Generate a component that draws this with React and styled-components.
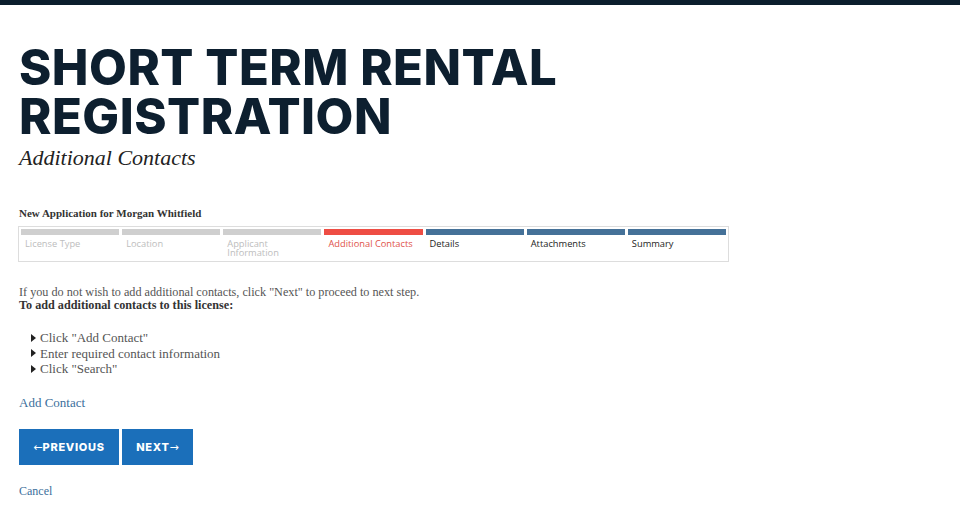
import React from "react";
import styled, { createGlobalStyle } from "styled-components";

const GlobalStyle = createGlobalStyle`
  html, body {
    margin: 0;
    padding: 0;
    background: #fff;
  }
  body {
    font-family: "Liberation Serif", "DejaVu Serif", serif;
    color: #444;
  }
`;

const TopBar = styled.div`
  height: 5px;
  background: #0b1e2d;
`;

const Page = styled.main`
  padding: 38px 19px 0 19px;
`;

const Title = styled.h1`
  margin: 0;
  font-family: Inter, "Noto Sans", sans-serif;
  font-weight: 800;
  font-size: 49px;
  line-height: 49px;
  letter-spacing: 0.5px;
  color: #0d1f2f;
  width: 570px;
`;

const Subtitle = styled.h2`
  margin: 5px 0 0 0;
  font-style: italic;
  font-weight: 400;
  font-size: 22px;
  line-height: 24px;
  color: #222;
`;

const AppLabel = styled.div`
  margin-top: 37px;
  font-size: 11px;
  font-weight: 700;
  color: #333;
`;

const Steps = styled.ol`
  list-style: none;
  margin: 7px 0 0 -1px;
  padding: 2px 2px 0 2px;
  width: 705px;
  height: 32px;
  border: 1px solid #ddd;
  display: grid;
  grid-template-columns: repeat(7, 1fr);
  column-gap: 3px;
`;

const stepColors = {
  done: { bar: "#cfcfcf", text: "#bdbdbd" },
  current: { bar: "#ee4d44", text: "#e0524a" },
  todo: { bar: "#457198", text: "#222" },
};

const Step = styled.li`
  border-top: 6px solid ${(p) => stepColors[p.$state].bar};
  padding: 4px 0 0 4px;
  font-family: "Open Sans", "Noto Sans", sans-serif;
  font-size: 9.3px;
  line-height: 9px;
  color: ${(p) => stepColors[p.$state].text};
`;

const Intro = styled.p`
  margin: 24px 0 0 0;
  font-size: 12.2px;
  line-height: 13px;
  color: #555;
`;

const Strong = styled.strong`
  display: block;
  color: #333;
`;

const Bullets = styled.ul`
  list-style: none;
  margin: 18px 0 0 0;
  padding: 0 0 0 12px;
  font-size: 13px;
  line-height: 15.5px;
  color: #555;
`;

const Bullet = styled.li`
  display: flex;
  align-items: center;
  gap: 4px;

  &::before {
    content: "";
    width: 0;
    height: 0;
    border-top: 4px solid transparent;
    border-bottom: 4px solid transparent;
    border-left: 5px solid #222;
  }
`;

const TextLink = styled.a`
  display: inline-block;
  color: #3c6f9c;
  font-size: ${(p) => p.$size || 13}px;
  text-decoration: none;
`;

const AddRow = styled.div`
  margin-top: 16px;
`;

const Buttons = styled.div`
  display: flex;
  gap: 3px;
  margin-top: 18px;
`;

const NavButton = styled.button`
  height: 36px;
  width: ${(p) => p.$width}px;
  border: none;
  background: #1b6fba;
  color: #fff;
  font-family: Inter, "Noto Sans", sans-serif;
  font-weight: 800;
  font-size: 11px;
  letter-spacing: 0.7px;
  padding: 0;
  cursor: pointer;
`;

const Arrow = styled.span`
  font-family: "DejaVu Sans", sans-serif;
  font-weight: 400;
  letter-spacing: 0;
`;

const CancelRow = styled.div`
  margin-top: 16px;
`;

const steps = [
  { label: "License Type", state: "done" },
  { label: "Location", state: "done" },
  { label: "Applicant Information", state: "done" },
  { label: "Additional Contacts", state: "current" },
  { label: "Details", state: "todo" },
  { label: "Attachments", state: "todo" },
  { label: "Summary", state: "todo" },
];

export default function App() {
  return (
    <>
      <GlobalStyle />
      <TopBar />
      <Page>
        <Title>SHORT TERM RENTAL REGISTRATION</Title>
        <Subtitle>Additional Contacts</Subtitle>
        <AppLabel>New Application for Morgan Whitfield</AppLabel>
        <Steps>
          {steps.map((s) => (
            <Step key={s.label} $state={s.state}>
              {s.label}
            </Step>
          ))}
        </Steps>
        <Intro>
          If you do not wish to add additional contacts, click "Next" to proceed to next step.
          <Strong>To add additional contacts to this license:</Strong>
        </Intro>
        <Bullets>
          <Bullet>Click "Add Contact"</Bullet>
          <Bullet>Enter required contact information</Bullet>
          <Bullet>Click "Search"</Bullet>
        </Bullets>
        <AddRow>
          <TextLink href="#">Add Contact</TextLink>
        </AddRow>
        <Buttons>
          <NavButton $width={100}><Arrow>←</Arrow>PREVIOUS</NavButton>
          <NavButton $width={71}>NEXT<Arrow>→</Arrow></NavButton>
        </Buttons>
        <CancelRow>
          <TextLink href="#" $size={12}>Cancel</TextLink>
        </CancelRow>
      </Page>
    </>
  );
}
